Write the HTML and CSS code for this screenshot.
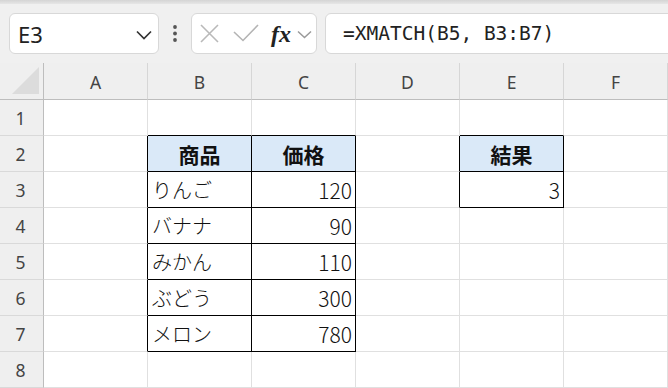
FILE: index.html
```html
<!DOCTYPE html>
<html lang="ja">
<head>
    <meta charset="UTF-8">
    <title>XMATCH</title>
    <link rel="stylesheet" href="styles.css">
</head>
<body>
    <div class="ribbon-edge"></div>
    <div class="formula-bar">
        <div class="name-box">
            <span class="name-text">E3</span>
            <svg class="chev" width="16" height="10" viewBox="0 0 16 10"><polyline points="1,1.5 8,8.5 15,1.5" fill="none" stroke="#333" stroke-width="1.7"/></svg>
        </div>
        <svg class="dots" width="8" height="20" viewBox="0 0 8 20"><circle cx="4" cy="3" r="1.9" fill="#555"/><circle cx="4" cy="9.5" r="1.9" fill="#555"/><circle cx="4" cy="16" r="1.9" fill="#555"/></svg>
        <div class="fx-box">
            <svg class="icon-x" width="20" height="20" viewBox="0 0 20 20"><path d="M1 1 L18 18 M18 1 L1 18" stroke="#b9b9b9" stroke-width="1.6" fill="none"/></svg>
            <svg class="icon-check" width="26" height="18" viewBox="0 0 26 18"><polyline points="1,8 10,16.5 25,1" fill="none" stroke="#b4b4b4" stroke-width="1.6"/></svg>
            <span class="fx">fx</span>
            <svg class="chev-small" width="16" height="9" viewBox="0 0 16 9"><polyline points="1,1.5 7.5,7.5 14,1.5" fill="none" stroke="#9a9a9a" stroke-width="1.5"/></svg>
        </div>
        <div class="formula-input">=XMATCH(B5, B3:B7)</div>
    </div>

    <div class="sheet">
        <div class="cell corner">
            <svg width="28" height="28" viewBox="0 0 28 28"><polygon points="27,0 27,27 0,27" fill="#dcdcdc"/></svg>
        </div>
        <div class="cell ch">A</div>
        <div class="cell ch">B</div>
        <div class="cell ch">C</div>
        <div class="cell ch">D</div>
        <div class="cell ch">E</div>
        <div class="cell ch">F</div>

        <div class="cell rh">1</div>
        <div class="cell"></div>
        <div class="cell kt"></div>
        <div class="cell kt"></div>
        <div class="cell"></div>
        <div class="cell kt"></div>
        <div class="cell"></div>

        <div class="cell rh">2</div>
        <div class="cell kb"></div>
        <div class="cell tb th">商品</div>
        <div class="cell tb th">価格</div>
        <div class="cell kb"></div>
        <div class="cell tb th">結果</div>
        <div class="cell"></div>

        <div class="cell rh">3</div>
        <div class="cell kb"></div>
        <div class="cell tb">りんご</div>
        <div class="cell tb num">120</div>
        <div class="cell kb"></div>
        <div class="cell tb num">3</div>
        <div class="cell"></div>

        <div class="cell rh">4</div>
        <div class="cell kb"></div>
        <div class="cell tb">バナナ</div>
        <div class="cell tb num">90</div>
        <div class="cell"></div>
        <div class="cell"></div>
        <div class="cell"></div>

        <div class="cell rh">5</div>
        <div class="cell kb"></div>
        <div class="cell tb">みかん</div>
        <div class="cell tb num">110</div>
        <div class="cell"></div>
        <div class="cell"></div>
        <div class="cell"></div>

        <div class="cell rh">6</div>
        <div class="cell kb"></div>
        <div class="cell tb">ぶどう</div>
        <div class="cell tb num">300</div>
        <div class="cell"></div>
        <div class="cell"></div>
        <div class="cell"></div>

        <div class="cell rh">7</div>
        <div class="cell kb"></div>
        <div class="cell tb">メロン</div>
        <div class="cell tb num">780</div>
        <div class="cell"></div>
        <div class="cell"></div>
        <div class="cell"></div>

        <div class="cell rh">8</div>
        <div class="cell"></div>
        <div class="cell"></div>
        <div class="cell"></div>
        <div class="cell"></div>
        <div class="cell"></div>
        <div class="cell"></div>
    </div>
</body>
</html>
```

FILE: styles.css
```css
body {
    margin: 0;
    padding: 0;
    width: 668px;
    height: 388px;
    overflow: hidden;
    background-color: #ffffff;
    font-family: "Noto Sans", "Noto Sans CJK JP", sans-serif;
}

.ribbon-edge {
    height: 4px;
    background: linear-gradient(#d4d4d4, #e6e6e6);
}

.formula-bar {
    display: flex;
    align-items: center;
    height: 59px;
    padding-left: 9px;
    background-color: #f0f0f0;
    box-sizing: border-box;
}

.name-box {
    display: flex;
    align-items: center;
    justify-content: space-between;
    width: 150px;
    height: 41px;
    padding: 0 6px 0 8px;
    box-sizing: border-box;
    background-color: #fff;
    border: 1px solid #d8d8d8;
    border-radius: 6px;
}

.name-text {
    font-size: 22px;
    color: #222;
    line-height: 1;
    padding-top: 1px;
}

.chev {
    margin-top: 2px;
}

.dots {
    margin: 0 12px;
}

.fx-box {
    display: flex;
    align-items: center;
    width: 126px;
    height: 41px;
    box-sizing: border-box;
    padding-left: 8px;
    background-color: #fff;
    border: 1px solid #d8d8d8;
    border-radius: 6px;
}

.icon-x {
    margin-top: 1px;
}

.icon-check {
    margin-left: 13px;
    margin-top: -1px;
}

.fx {
    margin-left: 12px;
    font-family: "Liberation Serif", serif;
    font-style: italic;
    font-weight: bold;
    font-size: 24px;
    color: #222;
    line-height: 1;
}

.chev-small {
    margin-left: 6px;
    margin-top: 2px;
}

.formula-input {
    display: flex;
    align-items: center;
    margin-left: 8px;
    margin-right: -12px;
    flex: 1;
    height: 41px;
    padding-left: 17px;
    box-sizing: border-box;
    background-color: #fff;
    border: 1px solid #d8d8d8;
    border-radius: 6px;
    font-family: "DejaVu Sans Mono", monospace;
    font-size: 19.5px;
    color: #222;
}

.sheet {
    display: grid;
    grid-template-columns: 44px repeat(6, 104px);
    grid-template-rows: 37px repeat(8, 36px);
}

.cell {
    display: flex;
    align-items: center;
    box-sizing: border-box;
    padding: 0 4px;
    border-right: 1px solid #e0e0e0;
    border-bottom: 1px solid #e0e0e0;
    font-family: "Noto Sans CJK JP", sans-serif;
    font-size: 20px;
    font-weight: 300;
    color: #111;
    white-space: nowrap;
}

.corner {
    background-color: #efefef;
    border-right: 1px solid #bdbdbd;
    border-bottom: 1px solid #bdbdbd;
    align-items: flex-end;
    justify-content: flex-end;
    padding: 0 3px 4px 0;
}

.ch {
    justify-content: center;
    background-color: #efefef;
    border-right-color: #d6d6d6;
    border-bottom-color: #bdbdbd;
    font-family: "Noto Sans", sans-serif;
    font-size: 17.5px;
    font-weight: 400;
    color: #444;
    padding-top: 2px;
}

.rh {
    justify-content: center;
    background-color: #efefef;
    border-right-color: #bdbdbd;
    border-bottom-color: #d9d9d9;
    font-family: "Noto Sans", sans-serif;
    font-size: 17.5px;
    font-weight: 400;
    color: #444;
    padding-left: 2px;
}

.kb {
    border-right-color: #000;
}

.kt {
    border-bottom-color: #000;
}

.tb {
    border-right-color: #000;
    border-bottom-color: #000;
}

.th {
    justify-content: center;
    background-color: #dae9f8;
    font-weight: bold;
    font-size: 21px;
}

.num {
    justify-content: flex-end;
    padding-right: 3px;
    font-size: 21px;
}
```
